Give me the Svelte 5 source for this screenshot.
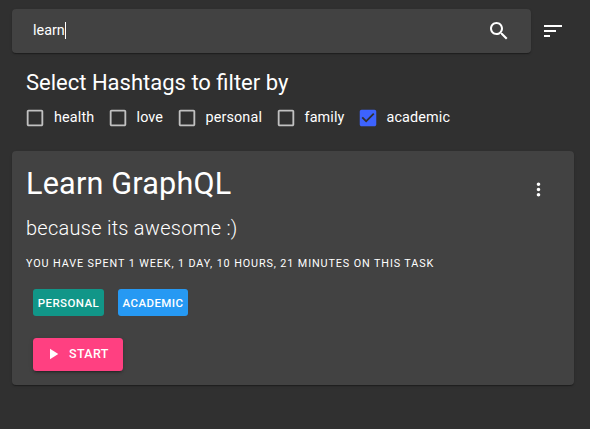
<script>
  const filters = [
    { name: 'health', on: false, w: 82.5 },
    { name: 'love', on: false, w: 69 },
    { name: 'personal', on: false, w: 99 },
    { name: 'family', on: false, w: 82 },
    { name: 'academic', on: true, w: 100 }
  ];
</script>

<main>
  <header>
    <div class="search">
      <span class="query">learn</span><i class="caret"></i>
      <svg class="find" width="24" height="24" viewBox="0 0 24 24"><path d="M15.5 14h-.79l-.28-.27C15.41 12.59 16 11.11 16 9.5 16 5.91 13.09 3 9.5 3S3 5.91 3 9.5 5.91 16 9.5 16c1.61 0 3.09-.59 4.23-1.57l.27.28v.79l5 4.99L20.49 19l-4.99-5zm-6 0C7.01 14 5 11.99 5 9.5S7.01 5 9.5 5 14 7.01 14 9.5 11.99 14 9.5 14z"/></svg>
    </div>
    <svg class="sort" width="24" height="24" viewBox="0 0 24 24"><path d="M3 18h6v-2H3v2zM3 6v2h18V6H3zm0 7h12v-2H3v2z"/></svg>
  </header>

  <h2>Select Hashtags to filter by</h2>
  <div class="filters">
    {#each filters as f}
      <label class:on={f.on} style="width:{f.w}px">
        <svg width="22" height="22" viewBox="0 0 24 24">
          {#if f.on}
            <path d="M19 3H5c-1.11 0-2 .9-2 2v14c0 1.1.89 2 2 2h14c1.11 0 2-.9 2-2V5c0-1.1-.89-2-2-2zm-9 14l-5-5 1.41-1.41L10 14.17l7.59-7.59L19 8l-9 9z"/>
          {:else}
            <path d="M19 5v14H5V5h14m0-2H5c-1.1 0-2 .9-2 2v14c0 1.1.9 2 2 2h14c1.1 0 2-.9 2-2V5c0-1.1-.9-2-2-2z"/>
          {/if}
        </svg>
        <span>{f.name}</span>
      </label>
    {/each}
  </div>

  <article>
    <div class="top">
      <h1>Learn GraphQL</h1>
      <svg width="21" height="21" viewBox="0 0 24 24"><path d="M12 8c1.100 0 2-.9 2-2s-.9-2-2-2-2 .9-2 2 .9 2 2 2zm0 2c-1.100 0-2 .9-2 2s.9 2 2 2 2-.9 2-2-.9-2-2-2zm0 6c-1.100 0-2 .9-2 2s.9 2 2 2 2-.9 2-2-.9-2-2-2z"/></svg>
    </div>
    <p class="desc">because its awesome :)</p>
    <p class="spent">You have spent 1 week, 1 day, 10 hours, 21 minutes on this task</p>
    <div class="tags">
      <span class="tag teal">Personal</span>
      <span class="tag blue">Academic</span>
    </div>
    <button>
      <svg width="18" height="18" viewBox="0 0 24 24"><path d="M8 5v14l11-7z"/></svg>
      <span>Start</span>
    </button>
  </article>
</main>

<style>
  :global(body) { background: #303030; }
  main {
    box-sizing: border-box;
    height: 429px;
    padding: 9px 16px 0 12px;
    overflow: hidden;
    background: #303030;
    color: #fff;
    font-family: Roboto, sans-serif;
  }
  svg { display: block; fill: currentColor; flex: none; }
  h1, h2, p { margin: 0; font-weight: 400; white-space: nowrap; }
  header { display: flex; align-items: center; height: 44px; }
  .search {
    display: flex;
    align-items: center;
    box-sizing: border-box;
    width: 519px;
    height: 44px;
    padding: 0 20px 0 21px;
    border-radius: 4px;
    background: #424242;
    box-shadow: 0 2px 1px -1px rgba(0,0,0,.2), 0 1px 1px rgba(0,0,0,.14), 0 1px 3px rgba(0,0,0,.12);
  }
  .query { font-size: 14.400px; line-height: 18px; }
  .caret { width: 1px; height: 17px; margin-bottom: 1px; background: #fff; }
  .find { margin-left: auto; }
  .sort { margin-left: 10px; }
  h2 { margin: 15px 0 0 14px; font-size: 22px; line-height: 29px; }
  .filters { display: flex; height: 22px; margin: 10px 0 0 12px; }
  label { display: flex; align-items: center; flex: none; font-size: 14.400px; letter-spacing: .13px; }
  label svg { color: rgba(255,255,255,.7); }
  label.on svg { color: #3d63fe; }
  label span { margin-left: 8px; line-height: 20px; }
  article {
    box-sizing: border-box;
    height: 234px;
    margin-top: 22px;
    padding: 13px 14px 0;
    border-radius: 4px;
    background: #424242;
    box-shadow: 0 2px 1px -1px rgba(0,0,0,.2), 0 1px 1px rgba(0,0,0,.14), 0 1px 3px rgba(0,0,0,.12);
  }
  .top { display: flex; justify-content: space-between; height: 40px; }
  .top svg { margin: 15px 11px 0 0; }
  h1 { font-size: 30.600px; line-height: 40px; letter-spacing: .18px; }
  .desc { margin-top: 11px; font-size: 20px; line-height: 26px; font-weight: 300; letter-spacing: .26px; }
  .spent { margin-top: 15px; font-size: 10.800px; line-height: 16px; letter-spacing: .89px; text-transform: uppercase; }
  .tags { display: flex; gap: 14px; margin: 17px 0 0 7px; }
  .tag {
    box-sizing: border-box;
    height: 27px;
    border-radius: 3px;
    font-size: 11.500px;
    line-height: 28px;
    font-weight: 500;
    letter-spacing: .42px;
    text-align: center;
    text-transform: uppercase;
  }
  .teal { width: 71px; background: #119688; }
  .blue { width: 70px; background: #2699f3; }
  button {
    display: flex;
    align-items: center;
    box-sizing: border-box;
    width: 90px;
    height: 33px;
    margin: 22px 0 0 7px;
    padding: 0 0 0 11px;
    border: 0;
    border-radius: 3.500px;
    background: #ff4081;
    color: #fff;
    font: 500 12.500px/20px Roboto, sans-serif;
    letter-spacing: .38px;
    text-transform: uppercase;
    box-shadow: 0 3px 1px -2px rgba(0,0,0,.2), 0 2px 2px rgba(0,0,0,.14), 0 1px 5px rgba(0,0,0,.12);
  }
  button svg { margin-top: -1px; }
  button span { margin: -1px 0 0 7px; }
</style>
